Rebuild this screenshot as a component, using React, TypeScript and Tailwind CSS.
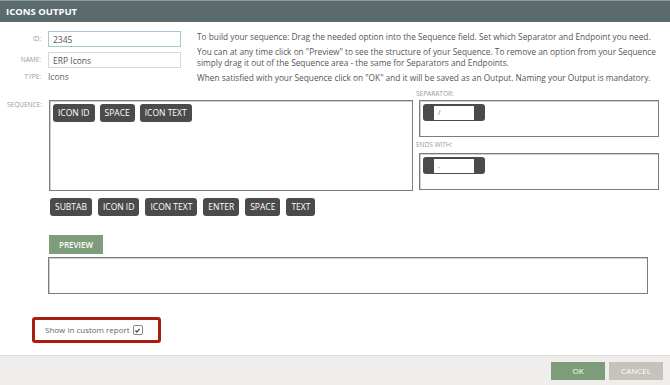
import React from "react";

const chip = "h-[18px] rounded-[3px] bg-[#4b4b4b] px-[5px] text-[8.5px] leading-[18px] text-white uppercase whitespace-nowrap";

function Chip({ label }: { label: string }) {
  return <div className={chip}>{label}</div>;
}

function Slot({ value }: { value: string }) {
  return (
    <div className="flex h-[17px] w-[62px] items-center rounded-[3px] bg-[#4b4b4b] pl-[11px]">
      <div className="h-[14px] w-[40px] bg-white pl-[4px] text-[7px] leading-[14px] text-[#666]">{value}</div>
    </div>
  );
}

export default function App() {
  return (
    <div className="flex h-[385px] w-[670px] flex-col overflow-hidden bg-white font-['Open_Sans',sans-serif] text-[#555]">
      <div className="h-[22px] shrink-0 border-t border-[#8f9b9d] bg-[#5a6a6d] pl-[6px] text-[9.5px] font-bold leading-[21px] text-white">
        ICONS OUTPUT
      </div>

      <div className="flex pt-[9px]">
        <div className="w-[197px] shrink-0">
          <div className="flex items-center">
            <div className="w-[42px] pr-[1px] text-right text-[6.5px] uppercase text-[#999]">ID:</div>
            <input
              readOnly
              value="2345"
              className="ml-[6px] h-[16px] w-[133px] border border-[#a9c6cd] px-[4px] text-[8.5px] text-[#555] outline-none"
            />
          </div>
          <div className="mt-[5px] flex items-center">
            <div className="w-[42px] pr-[1px] text-right text-[6.5px] uppercase text-[#999]">Name:</div>
            <input
              readOnly
              value="ERP Icons"
              className="ml-[6px] h-[16px] w-[133px] border border-[#d6d6d6] px-[4px] text-[8.5px] text-[#555] outline-none"
            />
          </div>
          <div className="mt-[2px] flex h-[14px] items-center">
            <div className="w-[42px] pr-[1px] text-right text-[6.5px] uppercase text-[#999]">Type:</div>
            <div className="ml-[6px] text-[8.5px] text-[#666]">Icons</div>
          </div>
        </div>
        <div className="w-[460px] text-[8.3px] leading-[11px] text-[#555]">
          <p>To build your sequence: Drag the needed option into the Sequence field. Set which Separator and Endpoint you need.</p>
          <p className="mt-[4px]">
            You can at any time click on "Preview" to see the structure of your Sequence. To remove an option from your Sequence simply drag it out of the Sequence area - the same for Separators and Endpoints.
          </p>
          <p className="mt-[4px]">When satisfied with your Sequence click on "OK" and it will be saved as an Output. Naming your Output is mandatory.</p>
        </div>
      </div>

      <div className="mt-[5px] flex">
        <div className="w-[49px] shrink-0 pt-[11px] pl-[7px] text-[6.5px] uppercase leading-[10px] text-[#999]">Sequence:</div>
        <div className="mt-[11px] flex h-[91px] w-[364px] shrink-0 items-start gap-[5px] border border-[#7c7c7c] p-[3px] shadow-[inset_1px_1px_0_#cfcfcf]">
          <Chip label="Icon ID" />
          <Chip label="Space" />
          <Chip label="Icon Text" />
        </div>
        <div className="ml-[6px] w-[240px] shrink-0">
          <div className="-ml-[3px] h-[11px] text-[6.5px] uppercase leading-[9px] text-[#999]">Separator:</div>
          <div className="h-[37px] border border-[#7c7c7c] p-[3px] shadow-[inset_1px_1px_0_#cfcfcf]">
            <Slot value="/" />
          </div>
          <div className="-ml-[3px] flex h-[16px] items-center text-[6.5px] uppercase text-[#999]">Ends with:</div>
          <div className="h-[37px] border border-[#7c7c7c] p-[3px] shadow-[inset_1px_1px_0_#cfcfcf]">
            <Slot value="." />
          </div>
        </div>
      </div>

      <div className="ml-[50px] mt-[7px] flex gap-[6px]">
        <Chip label="Subtab" />
        <Chip label="Icon ID" />
        <Chip label="Icon Text" />
        <Chip label="Enter" />
        <Chip label="Space" />
        <Chip label="Text" />
      </div>

      <div className="ml-[49px] mt-[19px] h-[19px] w-[54px] bg-[#7d9c79] text-center text-[8px] font-semibold uppercase leading-[19px] text-white">
        Preview
      </div>
      <div className="ml-[48px] mt-[3px] h-[37px] w-[600px] border border-[#7c7c7c] shadow-[inset_1px_1px_0_#cfcfcf]" />

      <div className="ml-[32px] mt-[23px] flex h-[26px] w-[129px] items-center rounded-[3px] border-[3px] border-[#a81d0c] pl-[10px]">
        <span className="text-[8px] text-[#666]">Show in custom report</span>
        <span className="ml-[3px] flex h-[10px] w-[10px] items-center justify-center rounded-[2px] border border-[#888]">
          <svg viewBox="0 0 10 10" className="h-[7px] w-[7px]">
            <path d="M2 5 L4.2 7.2 L8 2.8" fill="none" stroke="#444" strokeWidth="1.8" />
          </svg>
        </span>
      </div>

      <div className="mt-auto flex h-[30px] shrink-0 items-start justify-end gap-[4px] border-t border-[#dcdcdc] bg-[#efeeec] pr-[7px] pt-[6px]">
        <div className="h-[18px] w-[54px] bg-[#7d9c79] text-center text-[8px] uppercase leading-[18px] text-white">OK</div>
        <div className="h-[18px] w-[54px] bg-[#c6c2bc] text-center text-[8px] uppercase leading-[18px] text-white">Cancel</div>
      </div>
    </div>
  );
}
